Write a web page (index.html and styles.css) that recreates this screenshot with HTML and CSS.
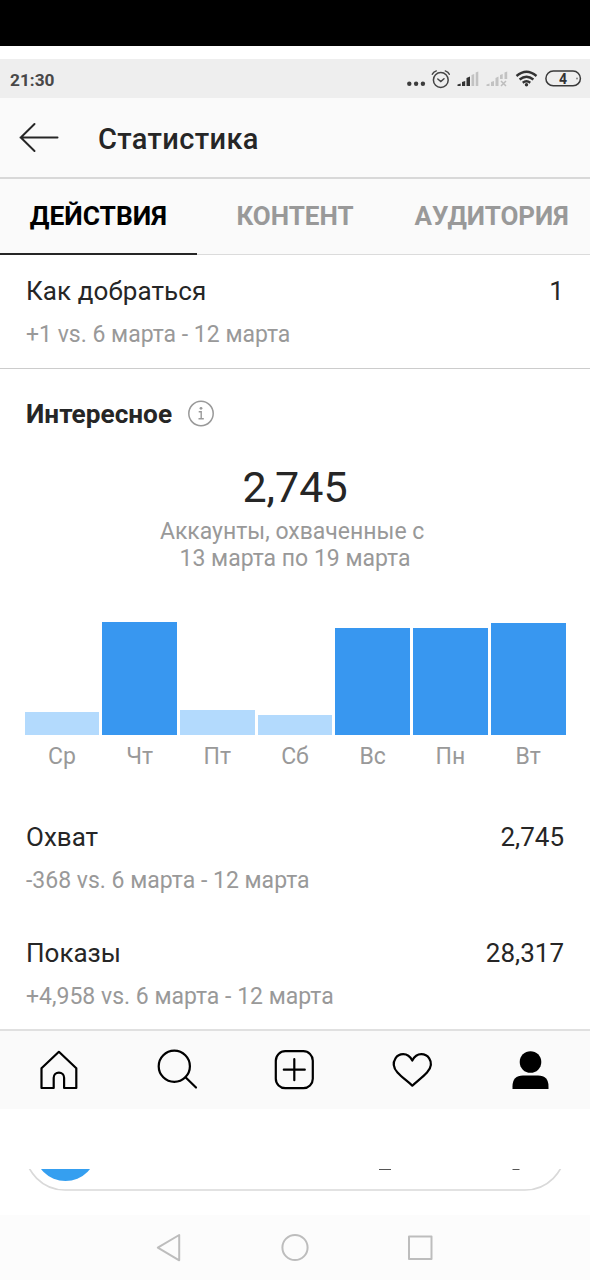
FILE: index.html
```html
<!DOCTYPE html>
<html lang="ru">
<head>
<meta charset="utf-8">
<title>Статистика</title>
<link rel="stylesheet" href="styles.css">
</head>
<body>
<div class="top-band"></div>
<div class="status">
  <span class="clock">21:30</span>
  <svg class="status-icons" width="180" height="39" viewBox="400 59 180 39">
    <g fill="#3c3c3c"><circle cx="409.3" cy="83.8" r="2.2"/><circle cx="416.1" cy="83.8" r="2.2"/><circle cx="422.9" cy="83.8" r="2.2"/></g>
    <g fill="none" stroke="#444" stroke-width="1.5" stroke-linecap="round"><circle cx="440.8" cy="80" r="7.4"/><path d="M437.8 79l3 2.5 3.2-2.8M432.3 74.3q1-2.500 4-3.400M449.300 74.300q-1-2.500-4-3.400"/></g>
    <g fill="#333"><path d="M457.500 86v-1.500l3.200-1V86zM462 86v-4l3.200-1v5zM466.500 86v-8l3.500-1.500V86z"/></g>
    <g fill="#c2c2c2"><path d="M471.500 86V75l2.700-1v12zM475.700 86V72.500l2.600-1V86z"/><path d="M486.500 86v-1.500l3-1V86zM491 86v-4l3-1v5zM495.500 86v-8l3-1.500V86zM500 79v-4l2.700-1v5zM504.500 79v-6.500l2.700-1V79z"/></g>
    <path d="M501 81l5 5m0-5l-5 5" stroke="#bdbdbd" stroke-width="1.500"/>
    <g fill="none" stroke="#333" stroke-width="2.300"><path d="M516.500 76q10-8.500 20 0M519.600 79.500q6.900-5.600 13.800 0M522.700 82.700q3.800-2.800 7.600 0"/></g>
    <circle cx="526.500" cy="84.800" r="1.700" fill="#333"/>
    <rect x="545.900" y="71" width="34.500" height="14.800" rx="7.400" fill="none" stroke="#3a3a3a" stroke-width="1.500"/>
    <circle cx="577" cy="78.500" r="1" fill="#888"/>
    <text class="battery" x="563" y="83.800" text-anchor="middle">4</text>
  </svg>
</div>
<header class="header">
  <svg width="42" height="34" viewBox="18 121 42 34"><path d="M57.500 137.500H20.500M34.500 124L20.800 137.500L34.500 151" fill="none" stroke="#262626" stroke-width="2" stroke-linecap="round"/></svg>
  <h1 class="title">Статистика</h1>
</header>
<nav class="tabs">
  <div class="tab tab-active"><span>ДЕЙСТВИЯ</span></div>
  <div class="tab"><span>КОНТЕНТ</span></div>
  <div class="tab"><span>АУДИТОРИЯ</span></div>
</nav>
<section class="metric directions">
  <div class="metric-line"><span>Как добраться</span><span>1</span></div>
  <div class="metric-sub">+1 vs. 6 марта - 12 марта</div>
</section>
<main class="discovery">
  <h2 class="section-title">Интересное
    <svg width="28" height="28" viewBox="0 0 28 28"><circle cx="14" cy="13.500" r="12.200" fill="none" stroke="#999" stroke-width="1.500"/><circle cx="14" cy="8.300" r="1.400" fill="#999"/><path d="M11.700 11.800h2.500v7M11.500 18.800h5.300" fill="none" stroke="#999" stroke-width="1.400"/></svg>
  </h2>
  <div class="total">2,745</div>
  <p class="caption">Аккаунты, охваченные с&nbsp;<br>13 марта по 19 марта</p>
  <div class="chart">
    <div class="day"><i class="bar low" style="height:23px"></i></div>
    <div class="day"><i class="bar" style="height:113.500px"></i></div>
    <div class="day"><i class="bar low" style="height:25px"></i></div>
    <div class="day"><i class="bar low" style="height:20.500px"></i></div>
    <div class="day"><i class="bar" style="height:107px"></i></div>
    <div class="day"><i class="bar" style="height:107.400px"></i></div>
    <div class="day"><i class="bar" style="height:112.500px"></i></div>
  </div>
  <div class="days"><span>Ср</span><span>Чт</span><span>Пт</span><span>Сб</span><span>Вс</span><span>Пн</span><span>Вт</span></div>
  <div class="metric reach">
    <div class="metric-line"><span>Охват</span><span>2,745</span></div>
    <div class="metric-sub">-368 vs. 6 марта - 12 марта</div>
  </div>
  <div class="metric">
    <div class="metric-line"><span>Показы</span><span>28,317</span></div>
    <div class="metric-sub">+4,958 vs. 6 марта - 12 марта</div>
  </div>
</main>
<nav class="app-nav">
  <svg viewBox="0 0 44 44"><path d="M4.500 40V20.300L21.900 3.800L39.300 20.300V40H27.100V29.800a5.200 5.200 0 0 0-10.400 0V40z" fill="none" stroke="#000" stroke-width="2.200" stroke-linejoin="round"/></svg>
  <svg viewBox="0 0 44 44"><g fill="none" stroke="#000" stroke-width="2.200" stroke-linecap="round"><circle cx="19.300" cy="18.300" r="15.600"/><path d="M30.500 29.300L41 39.500"/></g></svg>
  <svg viewBox="0 0 44 44"><g fill="none" stroke="#000" stroke-width="2.200" stroke-linecap="round"><rect x="3.800" y="3.200" width="37" height="37" rx="9.500"/><path d="M22.300 11.200v21M11.800 21.700h21"/></g></svg>
  <svg viewBox="0 0 44 44"><path d="M22.300 37.700C18 33.500 12 29.500 7.500 24.500C3.500 20 2.800 14.500 5.500 10.300C8.500 5.500 17.500 3.300 22.300 12.500C27 3.300 36 5.500 39.200 10.300C42 14.500 41 20 37 24.500C32.500 29.500 26.500 33.500 22.300 37.700z" fill="none" stroke="#000" stroke-width="2.200" stroke-linejoin="round"/></svg>
  <svg viewBox="0 0 44 44"><circle cx="22.500" cy="14" r="10.800"/><path d="M4.500 41v-2.500Q4.500 27.500 15 27.500H30Q40.500 27.500 40.500 38.500V41z"/></svg>
</nav>
<svg class="composer" width="590" height="46" viewBox="0 1169 590 46">
  <rect x="25" y="1110" width="540" height="80" rx="40" fill="#fff" stroke="#d9d9d9" stroke-width="1.700"/>
  <circle cx="65.500" cy="1150" r="31" fill="#359ff0"/>
  <path d="M379 1169.500h12M512.500 1169.500h7" stroke="#555" stroke-width="1"/>
</svg>
<footer class="system-nav">
  <svg width="280" height="40" viewBox="155 1228 280 40"><g fill="none" stroke="#bdbdbd" stroke-width="2" stroke-linejoin="round"><path d="M179.200 1235v25.300L157.800 1247.700z"/><circle cx="295" cy="1247.500" r="12.600"/><rect x="409" y="1236.600" width="22.500" height="22.500"/></g></svg>
</footer>
</body>
</html>
```
FILE: styles.css
```css
* { box-sizing: border-box; }
body { margin: 0; width: 590px; height: 1280px; overflow: hidden; background: #fff; color: #262626; font-family: Roboto, sans-serif; }
h1, h2, p { margin: 0; }
svg { display: block; flex: none; overflow: visible; }
.top-band { height: 46px; background: #000; }
.status { margin-top: 13px; height: 39px; padding: 0 10px; display: flex; align-items: center; justify-content: space-between; background: #eee; }
.clock { font-size: 17.300px; font-weight: 700; color: #484848; padding-top: 2px; }
.battery { font: 700 14px Roboto, sans-serif; fill: #333; }
.header { height: 81px; padding: 1px 18px 0; display: flex; align-items: center; gap: 38px; background: #fafafa; border-bottom: 2px solid #d8d8d8; }
.title { font-size: 29px; font-weight: 500; line-height: 36px; padding-top: 2px; letter-spacing: .35px; }
.tabs { height: 76px; display: grid; grid-template-columns: repeat(3, 1fr); background: #fafafa; }
.tab { display: flex; justify-content: center; align-items: center; padding-bottom: 2px; border-bottom: 1px solid #dbdbdb; font-size: 26px; font-weight: 700; color: #999; }
.tab-active { color: #000; border-bottom: 2px solid #262626; padding-bottom: 0; font-size: 26.400px; }
.metric { height: 116px; padding: 18px 26px 0; }
.directions { height: 114px; border-bottom: 1px solid #ccc; }
.metric-line { display: flex; justify-content: space-between; font-size: 26px; line-height: 36px; }
.directions .metric-line { letter-spacing: .1px; }
.metric-sub { margin-top: 11px; font-size: 23px; line-height: 30px; color: #999; }
.discovery { height: 660px; }
.section-title { display: flex; align-items: center; gap: 15px; padding: 27px 26px 0; font-size: 26.200px; font-weight: 700; line-height: 36px; }
.total { margin-top: 30px; text-align: center; font-size: 43px; line-height: 50px; }
.caption { margin-top: 6px; text-align: center; font-size: 23px; line-height: 27px; color: #999; }
.chart { height: 114px; margin: 49px 24.500px 0; display: grid; grid-template-columns: repeat(7, 1fr); gap: 3px; }
.day { display: flex; align-items: flex-end; }
.bar { width: 100%; background: #3897f0; }
.low { background: #b3dafd; }
.days { margin: 6px 24.500px 0; display: grid; grid-template-columns: repeat(7, 1fr); gap: 3px; text-align: center; font-size: 23px; line-height: 31px; color: #999; }
.reach { margin-top: 29px; }
.app-nav { height: 80px; display: grid; grid-template-columns: repeat(5, 1fr); justify-items: center; align-items: center; padding-right: 1px; background: #fafafa; border-top: 2px solid #e0e0e0; }
.app-nav svg { width: 44px; height: 44px; }
.composer { margin-top: 60px; overflow: hidden; }
.system-nav { height: 65px; display: flex; justify-content: center; align-items: center; background: #fcfcfc; }
```
